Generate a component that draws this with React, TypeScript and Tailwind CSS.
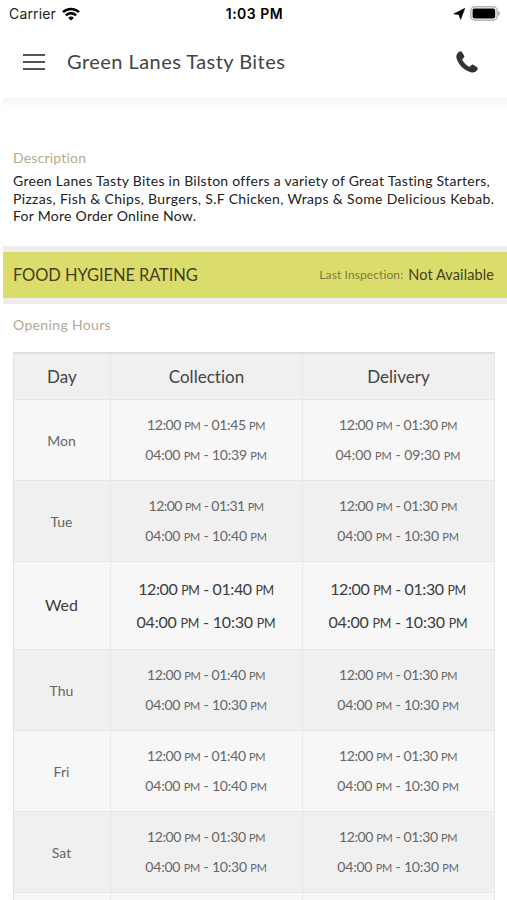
import React from "react";

type Slot = [string, string];
type DayRow = { day: string; collection: Slot[]; delivery: Slot[]; today?: boolean };

const HOURS: DayRow[] = [
  { day: "Mon", collection: [["12:00", "01:45"], ["04:00", "10:39"]], delivery: [["12:00", "01:30"], ["04:00", "09:30"]] },
  { day: "Tue", collection: [["12:00", "01:31"], ["04:00", "10:40"]], delivery: [["12:00", "01:30"], ["04:00", "10:30"]] },
  { day: "Wed", collection: [["12:00", "01:40"], ["04:00", "10:30"]], delivery: [["12:00", "01:30"], ["04:00", "10:30"]], today: true },
  { day: "Thu", collection: [["12:00", "01:40"], ["04:00", "10:30"]], delivery: [["12:00", "01:30"], ["04:00", "10:30"]] },
  { day: "Fri", collection: [["12:00", "01:40"], ["04:00", "10:40"]], delivery: [["12:00", "01:30"], ["04:00", "10:30"]] },
  { day: "Sat", collection: [["12:00", "01:30"], ["04:00", "10:30"]], delivery: [["12:00", "01:30"], ["04:00", "10:30"]] },
];

// Ranges with more narrow "1" digits are set tighter.
const TRACKING = ["tracking-[0px]", "tracking-[-0.2px]", "tracking-[-0.38px]", "tracking-[-0.55px]"];

function Wifi() {
  return (
    <svg className="h-[14px] w-[18px]" viewBox="0 0 18 14" fill="none" stroke="#000" strokeWidth="2.5">
      <path d="M1 5.1a11.6 11.6 0 0 1 16 0" />
      <path d="M3.9 8.4a7.4 7.4 0 0 1 10.2 0" />
      <path d="M9 13.6 6.2 10.9a4 4 0 0 1 5.6 0Z" fill="#000" stroke="none" />
    </svg>
  );
}

function StatusBar() {
  return (
    <div className="grid h-[28px] grid-cols-3 items-center pr-[7px] pb-px pl-[9px] font-['Inter',sans-serif] text-black">
      <div className="flex items-center gap-[6px] text-[14px] tracking-[0.15px] text-[#222]">
        <span>Carrier</span>
        <Wifi />
      </div>
      <div className="text-center text-[14px] font-semibold tracking-[0.5px]">1:03 PM</div>
      <div className="flex items-center justify-end gap-[5px]">
        <svg className="h-3 w-3" viewBox="0 0 12 12">
          <path d="M11.8.3 7.6 11.4 6 6.6.8 5.9Z" fill="#000" stroke="#000" strokeWidth=".6" strokeLinejoin="round" />
        </svg>
        <svg className="h-[15px] w-[30px]" viewBox="0 0 30 15">
          <rect x=".8" y=".8" width="26.4" height="13.4" rx="4" fill="#fff" stroke="#b5b5b5" strokeWidth="1.5" />
          <rect x="2.6" y="2.6" width="22.6" height="9.8" rx="2" fill="#000" />
          <path d="M28.2 5v5c2.2-.8 2.2-4.2 0-5Z" fill="#aaa" />
        </svg>
      </div>
    </div>
  );
}

function PhoneIcon() {
  return (
    <svg className="h-[22px] w-[22px]" viewBox="0 0 22 22">
      <path
        fill="#333"
        d="M3.6.5C4.5 0 5.3.3 5.9 1.1L8 4.4c.6 1 .5 1.8-.2 2.4l-1.2.9c-.4.4-.4 1 0 1.7 1.5 2.4 3.4 4.4 6 6 .7.4 1.3.4 1.7-.1l1-1.1c.6-.7 1.4-.8 2.2-.3l3.3 2.1c.9.6 1.1 1.4.7 2.2-1.3 2.7-3.9 3.9-6.8 3C7.6 19 2.6 14 .6 7.5-.2 4.7.9 1.9 3.6.5Z"
      />
    </svg>
  );
}

function Header() {
  return (
    <header className="flex h-[70px] items-center pr-[29px] pb-[2px] pl-[23px] text-[#444]">
      <div className="flex w-[44px] flex-col gap-[5px]">
        <i className="h-[2px] w-[22px] bg-[#555]" />
        <i className="h-[2px] w-[22px] bg-[#555]" />
        <i className="h-[2px] w-[22px] bg-[#555]" />
      </div>
      <h1 className="flex-1 pb-[2px] text-[20px] tracking-[0.45px]">Green Lanes Tasty Bites</h1>
      <PhoneIcon />
    </header>
  );
}

function TimeRange({ slot, today }: { slot: Slot; today?: boolean }) {
  const meridiem = today ? "text-[12.5px]" : "text-[11px]";
  const ones = slot.join("").split("1").length - 1;
  return (
    <div className={`${TRACKING[ones]} ${today ? "h-[33px] leading-[33px]" : "h-[30px] leading-[30px]"}`}>
      {slot[0]} <span className={meridiem}>PM</span> - {slot[1]} <span className={meridiem}>PM</span>
    </div>
  );
}

function HoursTable() {
  const columns = "grid grid-cols-[97px_192px_192px] border-b border-[#e6e6e6]";
  const cell = "flex flex-col items-center justify-center border-r border-[#e8e8e8]";
  return (
    <div className="ml-[13px] w-[482px] border-t-2 border-l border-t-[#dedede] border-l-[#e2e2e2]">
      <div className={`${columns} h-[46px] bg-[#f0f0f0] text-[17px] tracking-[0.03px] text-[#444]`}>
        <div className={cell}>Day</div>
        <div className={cell}>Collection</div>
        <div className={cell}>Delivery</div>
      </div>
      {HOURS.map((row, i) => {
        const bodyCell = `${cell} pr-px ${row.today ? "pb-[2px]" : ""}`;
        return (
          <div
            key={row.day}
            className={`${columns} ${i % 2 ? "bg-[#f0f0f0]" : "bg-[#f7f7f7]"} ${
              row.today ? "h-[88px] text-[16px] text-[#3c3c3c]" : "h-[81px] text-[14px] text-[#666]"
            }`}
          >
            <div className={bodyCell}>{row.day}</div>
            <div className={bodyCell}>
              {row.collection.map((s, j) => <TimeRange key={j} slot={s} today={row.today} />)}
            </div>
            <div className={bodyCell}>
              {row.delivery.map((s, j) => <TimeRange key={j} slot={s} today={row.today} />)}
            </div>
          </div>
        );
      })}
      <div className={`${columns} h-[81px] bg-[#f7f7f7]`}>
        <div className={cell} />
        <div className={cell} />
        <div className={cell} />
      </div>
    </div>
  );
}

export default function App() {
  return (
    <div className="h-[900px] w-[507px] overflow-hidden bg-white font-['Lato',sans-serif]">
      <StatusBar />
      <Header />
      <div className="ml-[3px] h-[10px] bg-linear-to-b from-[#f5f5f5] to-white" />
      <section className="h-[138px] pt-[40px] pl-[13px]">
        <h2 className="h-[24px] text-[14px] leading-[20px] tracking-[0.2px] text-[#b5ab90]">Description</h2>
        <p className="text-[14px] leading-[17.7px] tracking-[0.27px] whitespace-nowrap text-[#222]">
          Green Lanes Tasty Bites in Bilston offers a variety of Great Tasting Starters,
          <br />
          <span className="tracking-[0.34px]">
            Pizzas, Fish &amp; Chips, Burgers, S.F Chicken, Wraps &amp; Some Delicious Kebab.
          </span>
          <br />
          For More Order Online Now.
        </p>
      </section>
      <section className="ml-[3px] flex h-[58px] items-center justify-between border-y-[6px] border-[#ededed] bg-[#dadd6b] pr-[13px] pl-[10px]">
        <span className="text-[16.5px] tracking-[-0.1px] text-[#453f20]">FOOD HYGIENE RATING</span>
        <span className="flex items-center gap-[5px]">
          <span className="text-[12px] tracking-[0.1px] text-[#80793c]">Last Inspection:</span>
          <span className="text-[14.5px] tracking-[0.1px] text-[#453f20]">Not Available</span>
        </span>
      </section>
      <h2 className="h-[48px] pt-[11px] pl-[13px] text-[14px] leading-[20px] tracking-[0.35px] text-[#b5ab90]">Opening Hours</h2>
      <HoursTable />
    </div>
  );
}
